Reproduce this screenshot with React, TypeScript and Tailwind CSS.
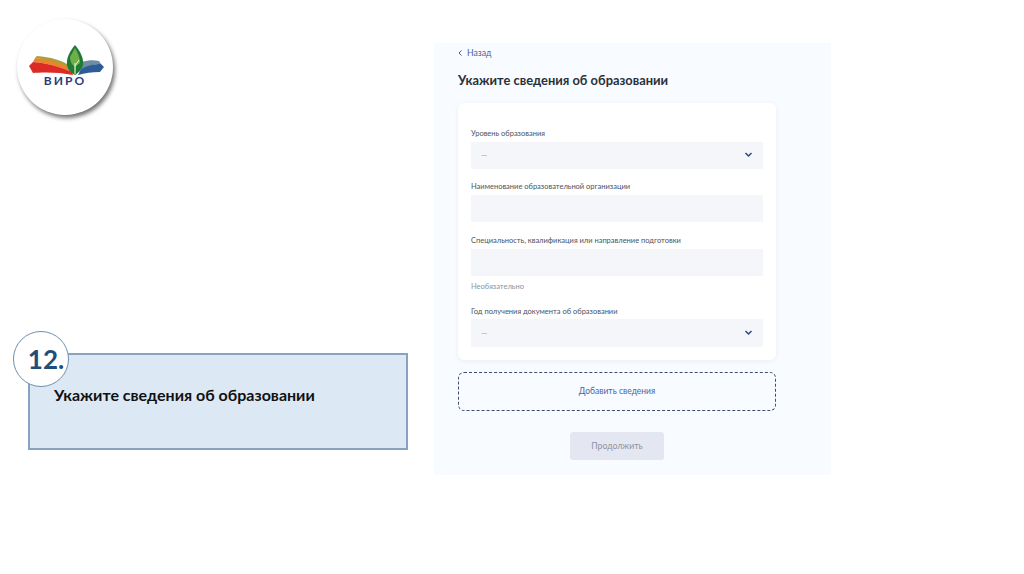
const font = "font-['Lato','Liberation_Sans',sans-serif]"

function Logo() {
  return (
    <div className="w-[96px] h-[96px] rounded-full bg-white shadow-[2px_3px_4px_rgba(0,0,0,0.55)] ml-[17px] mt-[19px] shrink-0">
      <svg width="96" height="96" viewBox="17 19 96 96">
        <path d="M35 58 L37 56 C50 57 62 60 70 66 L70 70 C60 64 48 60 35 58Z" fill="#a8a03c" />
        <path d="M33 62 L35 58 C48 59 62 63 71 69 L72 72 C60 67 46 63 33 62Z" fill="#e8842c" />
        <path d="M29 66 L33 62 C46 63 61 67 72 72 L73 75 C60 72 42 72 33 73Z" fill="#dc2a24" />
        <path d="M82 62 C88 60 94 60 99 61 L101 64 C94 64 87 66 82 69Z" fill="#6f8fa0" />
        <path d="M81 69 C88 65 95 64 101 64 L104 67 L100 72 C92 72 85 73 78 75Z" fill="#2f5c98" />
        <path d="M75 45 C80 51 84 58 83 65 C82 70 78 73 75 75 C71 73 68 70 67 65 C66 58 70 51 75 45Z" fill="#1f7a38" />
        <path d="M75 48 C78 53 80 58 80 63 L76 66 L75 75 L74 66 C71 64 70 60 70 57Z" fill="#6fae48" />
        <path d="M75 74 L75 63 M75 66 L79 60" stroke="#e8f0c8" strokeWidth="1" fill="none" />
        <text x="65" y="85" textAnchor="middle" fontSize="12" fontWeight="700" letterSpacing="2" fill="#2a3c78" fontFamily="Lato, sans-serif">ВИРО</text>
      </svg>
    </div>
  )
}

function Chevron() {
  return (
    <svg width="9" height="6" viewBox="0 0 9 6" fill="none">
      <path d="M1.5 1 L4.5 4 L7.5 1" stroke="#2c4a7c" strokeWidth="1.5" />
    </svg>
  )
}

function Field(props: { label: string; select?: boolean; hint?: string }) {
  return (
    <div className="flex flex-col">
      <p className="text-[7.5px] leading-[10px] text-[#4a5360] h-[10px] mb-[2.5px]">{props.label}</p>
      {props.select ? (
        <div className="h-[27.5px] bg-[#f4f6fa] flex items-center justify-between pl-[10px] pr-[10px]">
          <span className="text-[8px] text-[#9aa3ad]">—</span>
          <Chevron />
        </div>
      ) : (
        <div className="h-[27.5px] bg-[#f4f6fa]" />
      )}
      {props.hint ? <p className="text-[7.5px] leading-[10px] text-[#8b949e] mt-[6px]">{props.hint}</p> : null}
    </div>
  )
}

export default function App() {
  return (
    <div className={`w-[1024px] h-[574px] bg-white flex overflow-hidden ${font}`}>
      <div className="w-[434px] shrink-0 flex flex-col">
        <Logo />
        <div className="relative ml-[28px] mt-[238px] w-[380px] h-[97px] bg-[#dde8f5] border-2 border-[#86a3c2] pl-[24px] pt-[30px]">
          <div className="absolute left-[-17px] top-[-24px] w-[56px] h-[56px] rounded-full bg-white border border-[#6d8fb3] flex items-center justify-center pl-[10px]">
            <span className="text-[26px] font-bold text-[#1f4e79] leading-none">12.</span>
          </div>
          <p className="text-[16px] leading-[20px] font-bold text-[#111111]">Укажите сведения об образовании</p>
        </div>
      </div>

      <div className="w-[397px] h-[432px] mt-[43px] bg-[#f8fbff] pl-[24px] pr-[55px] flex flex-col">
        <div className="flex items-center gap-[5px] h-[20px] text-[#4a64a0]">
          <svg width="4" height="6" viewBox="0 0 4 6" fill="none">
            <path d="M3.5 0.5 L1 3 L3.5 5.5" stroke="#4a5a80" strokeWidth="1" />
          </svg>
          <span className="text-[8.7px] leading-none">Назад</span>
        </div>
        <h1 className="text-[12.9px] leading-[18px] font-bold text-[#2b3038] mt-[8px]">Укажите сведения об образовании</h1>

        <div className="mt-[14px] h-[257px] bg-white rounded-[6px] shadow-[0_1px_4px_rgba(120,140,170,0.12)] px-[13px] pt-[26px] flex flex-col">
          <Field label="Уровень образования" select />
          <div className="mt-[13px]"><Field label="Наименование образовательной организации" /></div>
          <div className="mt-[14px]"><Field label="Специальность, квалификация или направление подготовки" hint="Необязательно" /></div>
          <div className="mt-[14.5px]"><Field label="Год получения документа об образовании" select /></div>
        </div>

        <div className="mt-[12px] h-[39px] rounded-[6px] border border-dashed border-[#3f4d6a] flex items-center justify-center">
          <span className="text-[8.5px] text-[#4a64a0]">Добавить сведения</span>
        </div>

        <div className="mt-[21px] self-center w-[94px] h-[28px] rounded-[3px] bg-[#e4e7f1] flex items-center justify-center">
          <span className="text-[8.7px] text-[#8d93a3]">Продолжить</span>
        </div>
      </div>
    </div>
  )
}
